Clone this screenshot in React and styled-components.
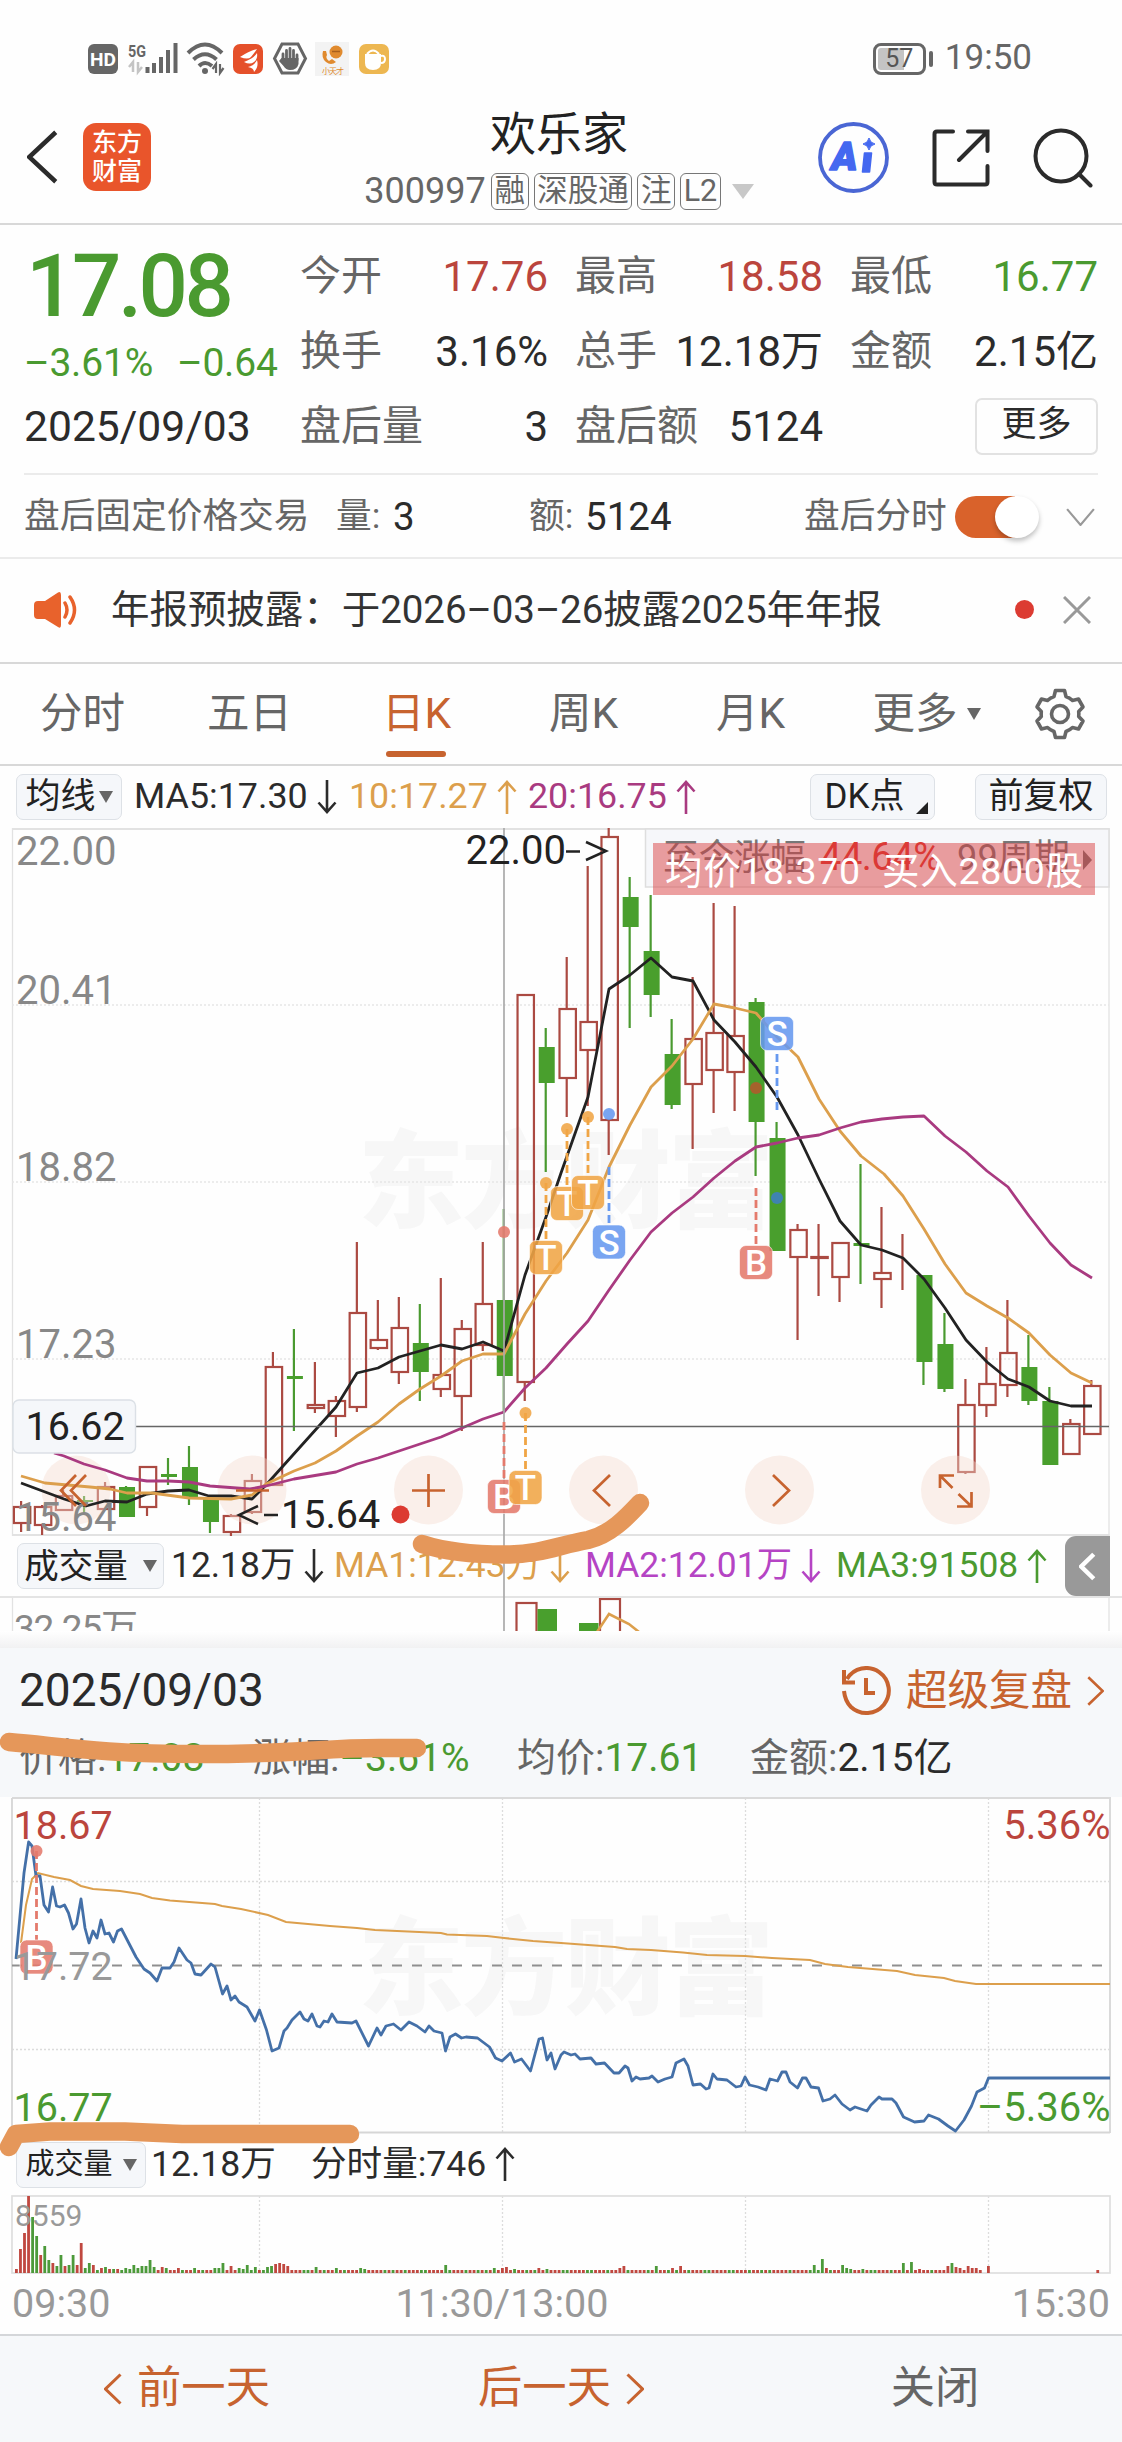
import React from "react";
import styled, { createGlobalStyle } from "styled-components";

const GREEN = "#4a9a30";
const RED = "#bb453d";
const ORANGE = "#c7632f";
const AMBER = "#dc9f4c";
const PURPLE = "#a93a80";
const INK = "#2b2b2b";
const GRAY = "#666";

const GlobalStyle = createGlobalStyle`
    * { box-sizing: border-box; }
    body {
        margin: 0;
        background: #fefefe;
        color: ${INK};
        font-family: Roboto, "Noto Sans CJK SC", sans-serif;
        line-height: 1.17;
        -webkit-font-smoothing: antialiased;
    }
    svg { display: block; flex: none; }
`;

const Page = styled.div`
    position: relative;
    width: 1122px;
    height: 2442px;
    overflow: hidden;
    white-space: nowrap;
`;

const StatusBar = styled.div`
    height: 82px;
    padding: 35px 90px 0 88px;
    display: flex;
    align-items: center;
    justify-content: space-between;
`;

const StatusGroup = styled.div`
    display: flex;
    align-items: center;
`;

const Battery = styled.div`
    width: 53px;
    height: 32px;
    border: 3px solid ${GRAY};
    border-radius: 8px;
    padding: 2px;
    position: relative;
    display: flex;
    align-items: center;
    justify-content: center;
    font-size: 25px;
    line-height: 22px;
    color: #555;
    background: linear-gradient(90deg, #c4c4c4 26px, transparent 26px) content-box;
    &::after {
        content: "";
        position: absolute;
        right: -10px;
        top: 5px;
        width: 4px;
        height: 16px;
        border-radius: 2px;
        background: ${GRAY};
    }
`;

const Clock = styled.span`
    font-size: 35px;
    color: ${GRAY};
    margin-left: 19px;
`;

const NavBar = styled.div`
    height: 143px;
    border-bottom: 2px solid #d8d8d8;
    display: grid;
    grid-template-columns: 340px 438px 1fr;
    align-items: center;
`;

const NavLeft = styled.div`
    display: flex;
    align-items: center;
    gap: 25px;
    padding: 9px 0 0 27px;
`;

const AppLogo = styled.div`
    width: 68px;
    height: 68px;
    border-radius: 13px;
    background: #e9552b;
    color: #fff;
    font-size: 25px;
    font-weight: 500;
    line-height: 29px;
    text-align: center;
    white-space: normal;
    padding: 5px 8px;
`;

const NavCenter = styled.div`
    display: flex;
    flex-direction: column;
    align-items: center;
    padding-top: 11px;
`;

const StockName = styled.div`
    font-size: 46px;
    line-height: 58px;
    color: #222;
`;

const StockMeta = styled.div`
    display: flex;
    align-items: center;
    gap: 5px;
    margin-top: 8px;
    height: 40px;
    font-size: 36px;
    color: ${GRAY};
`;

const Tag = styled.span`
    height: 37px;
    min-width: 38px;
    padding: 0 2.5px;
    border: 1.5px solid #777;
    border-radius: 6px;
    font-size: 30.5px;
    line-height: 33px;
    text-align: center;
`;

const Triangle = styled.i`
    width: 0;
    height: 0;
    border-left: ${({ $w }) => $w / 2}px solid transparent;
    border-right: ${({ $w }) => $w / 2}px solid transparent;
    border-top: ${({ $h }) => $h}px solid ${({ $color }) => $color || GRAY};
    margin-left: ${({ $ml }) => $ml || 0}px;
`;

const NavRight = styled.div`
    display: flex;
    align-items: center;
    gap: 43px;
    padding: 10px 0 0 40px;
`;

const QuotePanel = styled.div`
    display: flex;
    height: 250px;
    margin: 0 24px;
    padding-top: 14px;
    border-bottom: 2px solid #ebebeb;
`;

const PriceColumn = styled.div`
    width: 276px;
    display: flex;
    flex-direction: column;
`;

const Price = styled.div`
    height: 94px;
    line-height: 95px;
    padding-left: 2px;
    font-size: 87px;
    font-weight: 500;
    letter-spacing: -3.5px;
    color: ${GREEN};
`;

const Change = styled.div`
    height: 58px;
    line-height: 60px;
    font-size: 39px;
    letter-spacing: -0.2px;
    color: ${GREEN};
    display: flex;
    gap: 24px;
`;

const QuoteDate = styled.div`
    line-height: 70px;
    font-size: 42.6px;
`;

const QuoteGrid = styled.div`
    flex: 1;
    display: grid;
    grid-template-columns: 248px 248px 248px;
    grid-template-rows: repeat(3, 75px);
    column-gap: 27px;
`;

const QuoteCell = styled.div`
    display: flex;
    align-items: center;
    justify-content: space-between;
    font-size: 42px;
    color: ${({ $color }) => $color || INK};
`;

const QuoteLabel = styled.span`
    font-size: 41px;
    color: ${GRAY};
`;

const MoreButton = styled.div`
    justify-self: end;
    align-self: center;
    width: 123px;
    height: 57px;
    border: 2px solid #e2e2e2;
    border-radius: 7px;
    font-size: 35px;
    line-height: 50px;
    text-align: center;
`;

const AfterHours = styled.div`
    height: 84px;
    padding: 1px 24px 0 24px;
    border-bottom: 2px solid #ebebeb;
    display: grid;
    grid-template-columns: 312px 57px 136px 56px 219px 151px 111px 1fr;
    align-items: center;
    font-size: 38.5px;
`;

const SmallLabel = styled.span`
    font-size: 35.7px;
    color: ${GRAY};
`;

const Toggle = styled.div`
    width: 84px;
    height: 42px;
    border-radius: 21px;
    background: linear-gradient(90deg, #d9622b 60px, transparent 60px);
    display: flex;
    justify-content: flex-end;
    &::after {
        content: "";
        width: 44px;
        height: 42px;
        border-radius: 50%;
        background: #fff;
        box-shadow: 0 3px 5px rgba(0, 0, 0, 0.25);
    }
`;

const Notice = styled.div`
    height: 105px;
    padding: 0 31px 2px 34px;
    border-bottom: 2px solid #d8d8d8;
    display: flex;
    align-items: center;
    font-size: 38.5px;
    color: #333;
`;

const NoticeText = styled.div`
    flex: 1;
    padding-left: 32px;
    letter-spacing: -0.05px;
`;

const RedDot = styled.i`
    width: 19px;
    height: 19px;
    border-radius: 50%;
    background: #dc3b32;
    margin-right: 29px;
`;

const Tabs = styled.div`
    height: 102px;
    border-bottom: 2px solid #d8d8d8;
    display: grid;
    grid-template-columns: repeat(5, 167px) 185px 82px;
`;

const Tab = styled.div`
    position: relative;
    display: flex;
    align-items: center;
    justify-content: center;
    gap: 9px;
    padding: 0 2px 0 0;
    font-size: 42.5px;
    color: ${({ $active }) => ($active ? ORANGE : GRAY)};
    &::after {
        content: "";
        display: ${({ $active }) => ($active ? "block" : "none")};
        position: absolute;
        left: 52px;
        bottom: 7px;
        width: 60px;
        height: 6px;
        border-radius: 3px;
        background: ${ORANGE};
    }
`;

const MaRow = styled.div`
    height: 62px;
    padding-left: 16px;
    display: grid;
    grid-template-columns: 118px 215px 179px 282px 165px 132px;
    align-items: center;
    font-size: 35.8px;
`;

const Chip = styled.div`
    width: ${({ $w }) => $w}px;
    height: 46px;
    border: 1.5px solid #dde1e6;
    border-radius: 7px;
    background: #f5f7fa;
    color: #222;
    display: flex;
    align-items: center;
    justify-content: center;
    gap: ${({ $gap }) => $gap || 0}px;
    font-size: ${({ $size }) => $size || 35}px;
`;

const CornerMark = styled.i`
    align-self: flex-end;
    margin: 0 -8px 5px 12px;
    border-left: 12px solid transparent;
    border-bottom: 12px solid #222;
`;

const Reading = styled.div`
    display: flex;
    align-items: center;
    gap: ${({ $gap }) => $gap || 9}px;
    color: ${({ $color }) => $color || INK};
`;

const VolumeRow = styled.div`
    height: 62px;
    border-bottom: 2px solid #e4e4e4;
    padding-left: 17px;
    display: grid;
    grid-template-columns: 154px 163px 251px 251px 229px 45px;
    align-items: center;
    font-size: 35.4px;
`;

const Drawer = styled.div`
    height: 60px;
    border-radius: 11px 0 0 11px;
    background: #999;
    display: flex;
    align-items: center;
    justify-content: center;
`;

const SheetShadow = styled.div`
    height: 17px;
    background: linear-gradient(#fff, #f1f1f2);
`;

const SheetHead = styled.div`
    height: 149px;
    padding: 13px 18px 0 19px;
    background: #f6f8fa;
`;

const SheetTitle = styled.div`
    height: 60px;
    display: flex;
    align-items: center;
    font-size: 46px;
`;

const Replay = styled.div`
    margin-left: auto;
    display: flex;
    align-items: center;
    font-size: 41.5px;
    color: ${ORANGE};
    gap: 15px;
`;

const SheetStats = styled.div`
    height: 76px;
    display: grid;
    grid-template-columns: 233px 265px 233px 1fr;
    align-items: center;
    font-size: 39px;
    color: ${GRAY};
    b {
        font-weight: 400;
        color: ${GREEN};
    }
    em {
        font-style: normal;
        color: ${INK};
    }
`;

const MinuteVolumeRow = styled.div`
    height: 61px;
    padding-left: 16px;
    display: grid;
    grid-template-columns: 135px 160px 1fr;
    align-items: center;
    font-size: 35.6px;
`;

const TimeAxis = styled.div`
    height: 60px;
    padding: 0 12px 0 12px;
    display: grid;
    grid-template-columns: 200px 1fr 200px;
    align-items: center;
    font-size: 39.5px;
    color: #999;
    span:nth-child(2) { text-align: center; padding-right: 118px; margin-right: 0; }
    span:nth-child(3) { text-align: right; }
`;

const Footer = styled.div`
    height: 108px;
    border-top: 2px solid #d4d6d9;
    background: #f6f8fa;
    display: grid;
    grid-template-columns: repeat(3, 374px);
`;

const FooterItem = styled.div`
    display: flex;
    align-items: center;
    justify-content: center;
    gap: 15px;
    font-size: 44.3px;
    color: ${({ $color }) => $color};
`;

// hand-drawn highlighter, floats above the whole page
const MarkerLayer = styled.svg`
    position: absolute;
    left: 0;
    top: 0;
    pointer-events: none;
`;

/* ---------- icons ---------- */

const Chevron = ({ w, h, dir, stroke = 3, color = ORANGE }) => {
    const p = stroke / 2;
    const paths = {
        left: `M${w - p} ${p}L${p} ${h / 2}L${w - p} ${h - p}`,
        right: `M${p} ${p}L${w - p} ${h / 2}L${p} ${h - p}`,
        down: `M${p} ${p}L${w / 2} ${h - p}L${w - p} ${p}`,
    };
    return (
        <svg width={w} height={h} fill="none" stroke={color} strokeWidth={stroke}>
            <path d={paths[dir]} />
        </svg>
    );
};

const Arrow = ({ up }) => (
    <svg width="20" height="36" fill="none" stroke="currentColor" strokeWidth="2.6">
        <path d={up ? "M10 35V3M1.5 12.5L10 3L18.5 12.5" : "M10 1V33M1.5 23.5L10 33L18.5 23.5"} />
    </svg>
);

const StatusIcons = () => (
    <svg width="302" height="34" viewBox="88 42 302 34">
        <rect x="88" y="44" width="30" height="30" rx="6" fill={GRAY} />
        <text x="90" y="66" fontSize="19" fontWeight="700" fill="#fff" textLength="26" lengthAdjust="spacingAndGlyphs">HD</text>
        <text x="128" y="56.500" fontSize="17" fontWeight="700" fill={GRAY} textLength="18" lengthAdjust="spacingAndGlyphs">5G</text>
        <path d="M133 72V62L129 67M138 62V72L142 67" fill="none" stroke="#c4c4c4" strokeWidth="2.5" />
        <path d="M147.500 73V67M154 73V63M161 73V57M168 73V50M175.500 73V43" stroke={GRAY} strokeWidth="4" />
        <g fill="none" stroke={GRAY} strokeWidth="4">
            <path d="M188 53Q205 36 222 53" />
            <path d="M193.500 59.500Q205 49 216.500 59.500" />
            <path d="M199 66Q205 60 212 66" />
        </g>
        <circle cx="205" cy="71" r="3" fill={GRAY} />
        <path d="M216 73V64L212.500 69M220 64V73L223.500 68" fill="none" stroke={GRAY} strokeWidth="2.2" />
        <rect x="233" y="44" width="30" height="30" rx="7" fill="#e5502a" />
        <path d="M240 57Q249 51 257 49Q255 52 251 57Q248 60 240 57ZM244 62Q254 58 257 53Q258 59 254 62Q250 65 244 62ZM248 67Q254 66 257 60Q259 67 254 72Q254 68 248 67Z" fill="#fff" />
        <path d="M282 44H298L305.500 58.500L298 73H282L274.500 58.500Z" fill="none" stroke={GRAY} strokeWidth="3" />
        <path d="M283 61V54M286.500 60V50.500M290 60V48.500M293.500 60V50.500M297 60V55" stroke={GRAY} strokeWidth="2.8" strokeLinecap="round" />
        <path d="M281.500 58H298.500V64Q297 70 290 70Q286 70 283.500 66L279 61Z" fill={GRAY} />
        <rect x="315" y="42" width="34" height="34" fill="#f3f3f3" />
        <path d="M323 51Q321 58 326 62Q331 66 336 62L332 59L329 61Q325 58 327 55L326 51Z" fill="#e08a2e" />
        <circle cx="336" cy="52" r="6.500" fill="#e08a2e" />
        <path d="M332 51.500H340" stroke="#a9601c" strokeWidth="1.500" />
        <text x="322" y="73.500" fontSize="8" fill="#e08a2e" textLength="22">小天才</text>
        <rect x="359" y="44" width="30" height="30" rx="7" fill="#edb751" />
        <path d="M365 54H381V63Q381 70 373 70Q365 70 365 63Z" fill="#fff" />
        <path d="M381 56Q385 55 385 59Q385 63 381 63M367 54Q373 47 379 54" fill="none" stroke="#fff" strokeWidth="2" />
    </svg>
);

const AiIcon = () => (
    <svg width="71" height="71" viewBox="0 0 71 71">
        <circle cx="35.500" cy="35.500" r="33.500" fill="none" stroke="#4a66d4" strokeWidth="3.800" />
        <text x="13.500" y="48" fontSize="39" fontWeight="900" fontStyle="italic" fill="#4468f0" stroke="#4468f0" strokeWidth="1.600" strokeLinejoin="round" textLength="26" lengthAdjust="spacingAndGlyphs">A</text>
        <path d="M46.500 31H53.500L51.500 50H44.500Z" fill="#4468f0" stroke="#4468f0" strokeWidth="1.600" strokeLinejoin="round" />
        <path d="M51 16Q52 21 57 22Q52 23 51 28Q50 23 45 22Q50 21 51 16Z" fill="#4468f0" stroke="#4468f0" strokeWidth="1" />
    </svg>
);

const ShareIcon = () => (
    <svg width="58" height="58" viewBox="0 0 58 58" fill="none" stroke="#2b2b2b" strokeWidth="4" strokeLinecap="round">
        <path d="M21 2.500H5Q2.500 2.500 2.500 5V53Q2.500 55.500 5 55.500H53Q55.500 55.500 55.500 53V37" />
        <path d="M36 2.500H55.500V22M55.500 2.500L27 31" />
    </svg>
);

const SearchIcon = () => (
    <svg width="60" height="60" viewBox="0 0 60 60" fill="none" stroke="#2b2b2b" strokeWidth="4" strokeLinecap="round">
        <circle cx="28" cy="28" r="25.500" />
        <path d="M46 46L57.500 57.500" />
    </svg>
);

const SpeakerIcon = () => (
    <svg width="45" height="38" viewBox="0 0 45 38">
        <path d="M4 10H11L24 1.500Q27 0 27 4V34Q27 38 24 36L11 28H4Q0 28 0 24V14Q0 10 4 10Z" fill="#e8622c" />
        <path d="M31 12Q35 19 31 26M36 6Q45 19 36 32" fill="none" stroke="#e8622c" strokeWidth="3.500" strokeLinecap="round" />
    </svg>
);

const GearIcon = () => (
    <svg width="52" height="52" viewBox="0 0 52 52" fill="none" stroke={GRAY} strokeWidth="3.600" strokeLinejoin="round">
        <path d="M21.500 2.500H30.500L32 8.500Q36 10 38.500 12.500L44.500 11L49 19L44.700 23.500Q45 26 44.700 28.500L49 33L44.500 41L38.500 39.500Q36 42 32 43.500L30.500 49.500H21.500L20 43.500Q16 42 13.500 39.500L7.500 41L3 33L7.300 28.500Q7 26 7.300 23.500L3 19L7.500 11L13.500 12.500Q16 10 20 8.500Z" />
        <circle cx="26" cy="26" r="8.500" />
    </svg>
);

const HistoryIcon = () => (
    <svg width="50" height="50" viewBox="0 0 50 50" fill="none" stroke={ORANGE} strokeWidth="4">
        <path d="M3 25Q4 35 10 41A22.500 22.500 0 1 0 6 13" />
        <path d="M3 4V16.500H14" />
        <path d="M25 12V27H34" />
    </svg>
);

/* ---------- K line chart ---------- */

const candleX = (i) => 21.1 + 20.985 * i;

// [up, body top, body bottom, high, low] in page pixels
const candles = [
    [1, 1507, 1523, 1501, 1532], [1, 1507, 1525, 1505, 1535], [1, 1496, 1510, 1490, 1510],
    [0, 1500, 1502, 1496, 1515], [1, 1487, 1509, 1482, 1510], [0, 1487, 1517, 1486, 1517],
    [1, 1467, 1507, 1467, 1516], [0, 1474, 1477, 1458, 1485], [0, 1467, 1498, 1446, 1505],
    [0, 1498, 1522, 1498, 1533], [1, 1516, 1532, 1514, 1536], [1, 1481, 1512, 1474, 1514],
    [1, 1367, 1485, 1352, 1485], [0, 1376, 1379, 1329, 1431], [1, 1405, 1408, 1362, 1413],
    [1, 1401, 1416, 1396, 1437], [1, 1313, 1407, 1242, 1412], [1, 1340, 1348, 1300, 1350],
    [1, 1328, 1372, 1297, 1384], [0, 1343, 1372, 1304, 1401], [1, 1375, 1389, 1278, 1397],
    [1, 1329, 1396, 1320, 1431], [1, 1304, 1345, 1242, 1351], [0, 1300, 1376, 1209, 1412],
    [1, 995, 1382, 994, 1401], [0, 1047, 1083, 1028, 1172], [1, 1009, 1078, 957, 1117],
    [1, 1022, 1050, 866, 1106], [1, 837, 1120, 828, 1155], [0, 897, 927, 877, 1028],
    [0, 951, 995, 895, 1017], [0, 1054, 1105, 1019, 1109], [1, 1039, 1084, 977, 1149],
    [1, 1033, 1070, 903, 1113], [1, 1036, 1072, 906, 1111], [0, 1002, 1122, 998, 1176],
    [0, 1138, 1251, 1122, 1251], [1, 1230, 1257, 1224, 1340], [1, 1257, 1258, 1224, 1296],
    [1, 1243, 1277, 1242, 1302], [0, 1243, 1246, 1164, 1284], [1, 1273, 1279, 1207, 1308],
    [1, 1271, 1271, 1234, 1290], [0, 1275, 1362, 1275, 1385], [0, 1344, 1389, 1313, 1392],
    [1, 1405, 1472, 1379, 1474], [1, 1384, 1405, 1347, 1417], [1, 1353, 1385, 1300, 1397],
    [0, 1367, 1401, 1335, 1405], [0, 1401, 1465, 1387, 1465], [1, 1424, 1454, 1419, 1454],
    [1, 1386, 1434, 1380, 1434],
];

const ma5 = "21,1483 64,1499 86,1506 105,1501 127,1502 147,1494 168,1491 189,1490 209,1496 231,1496 252,1499 266,1485 336,1407 357,1373 378,1368 399,1357 420,1351 441,1345 462,1349 483,1342 504,1351 525,1275 546,1217 561,1173 588,1097 609,989 630,975 651,958 672,977 693,981 714,1020 735,1042 756,1067 777,1097 798,1135 819,1179 840,1221 861,1245 882,1250 903,1258 924,1279 945,1308 966,1340 987,1362 1008,1379 1029,1387 1050,1401 1071,1406 1092,1406";
const ma10 = "21,1476 45,1483 90,1487 110,1489 127,1493 152,1493 189,1498 231,1499 252,1495 266,1484 294,1471 315,1463 336,1451 357,1436 378,1422 399,1404 420,1389 441,1376 462,1361 483,1354 504,1354 525,1314 546,1281 567,1253 588,1220 609,1167 630,1125 651,1087 672,1066 693,1039 714,1004 735,1008 756,1013 777,1037 798,1057 819,1099 840,1131 861,1156 884,1174 903,1196 924,1229 945,1264 966,1293 987,1306 1008,1318 1029,1333 1050,1355 1071,1373 1092,1383";
const ma20 = "54,1453 64,1456 84,1464 105,1470 127,1478 147,1481 168,1481 189,1482 210,1486 250,1489 266,1486 294,1479 336,1472 357,1464 378,1458 399,1451 420,1444 441,1437 462,1428 483,1419 504,1412 525,1388 546,1368 567,1344 588,1321 609,1290 630,1260 651,1232 672,1213 693,1197 714,1178 735,1161 756,1147 777,1143 798,1138 819,1135 840,1128 861,1122 882,1119 903,1117 924,1116 945,1136 966,1152 987,1171 1008,1187 1029,1216 1050,1243 1071,1265 1092,1278";

const Candle = ({ i, data }) => {
    const [up, top, bottom, high, low] = data;
    const x = candleX(i);
    if (up) {
        return (
            <g stroke="#ab4a42" strokeWidth="2.2" fill="none">
                <path d={`M${x} ${high}V${top}M${x} ${bottom}V${low}`} />
                <rect x={x - 7.2} y={top} width="16.4" height={bottom - top} />
            </g>
        );
    }
    return (
        <g>
            <path d={`M${x} ${high}V${low}`} stroke={GREEN} strokeWidth="2.2" />
            <rect x={x - 7} y={top} width="16" height={bottom - top} fill="#499f2d" />
        </g>
    );
};

const badgeColors = { T: "#f0a545", S: "#6799ef", B: "#e47a6c" };

const Badge = ({ type, x, y, dot, line }) => {
    const color = badgeColors[type];
    return (
        <g>
            {line && <path d={`M${x} ${line[0]}V${line[1]}`} stroke={color} strokeWidth="2.8" strokeDasharray="8 4" />}
            {dot && <circle cx={x} cy={dot} r="6" fill={color} fillOpacity=".88" />}
            <rect x={x - 16.5} y={y - 17} width="33" height="34" rx="6.500" fill={color} fillOpacity=".88" stroke="#fff" strokeOpacity=".6" strokeWidth="1" />
            <text x={x} y={y + 12.5} fontSize="35" fontWeight="500" fill="#fff" textAnchor="middle">{type}</text>
        </g>
    );
};

const Watermark = ({ y }) => (
    <text x="358" y={y} fontSize="106" fontWeight="900" fill="#f7f7f7" textLength="416">东方财富</text>
);

const controlXs = [76, 252, 428.5, 603.5, 779.5, 955.5];

const KLineChart = () => (
    <svg width="1122" height="708" viewBox="0 828 1122 708">
        <Watermark y={1219} />
        <path d="M12.500 829H1109.500M12.500 1535H1109.500" stroke="#e2e2e2" strokeWidth="2" />
        <path d="M12.500 828V1536M1109 828V1536" stroke="#e2e2e2" strokeWidth="1.300" />
        <path d="M12 1005H1109M12 1182H1109M12 1359H1109" stroke="#e6e6e6" strokeWidth="1.500" strokeDasharray="2 2" />
        {candles.map((c, i) => <Candle key={i} i={i} data={c} />)}

        {controlXs.map((x) => <circle key={x} cx={x} cy="1490" r="34.500" fill="#f6dccf" fillOpacity=".42" />)}

        <g fill="none" strokeWidth="2.800" strokeLinejoin="round">
            <polyline points={ma5} stroke="#222" />
            <polyline points={ma10} stroke={AMBER} />
            <polyline points={ma20} stroke={PURPLE} />
        </g>
        <circle cx="756" cy="1088" r="6" fill="#a5622c" />
        <circle cx="777" cy="1198" r="6" fill="#3f83b0" />

        <g fontSize="40" fill="#888">
            <text x="16" y="865">22.00</text>
            <text x="16" y="1004">20.41</text>
            <text x="16" y="1181">18.82</text>
            <text x="16" y="1358">17.23</text>
            <text x="16" y="1531">15.64</text>
        </g>

        <path d="M504 828V1536" stroke="#aaa" strokeWidth="1.700" />
        <path d="M135 1426.500H1109" stroke="#666" strokeWidth="1.300" />
        <rect x="13" y="1400" width="122.500" height="53" rx="6" fill="#f5f7fa" stroke="#dbe0e6" strokeWidth="1.400" />
        <text x="25.500" y="1439.500" fontSize="39.500" fill="#222">16.62</text>

        <text x="465.500" y="863.500" fontSize="40" fill="#222">22.00</text>
        <path d="M566 851.500H580M586 842L606 851L586 860" fill="none" stroke="#222" strokeWidth="2.500" />
        <path d="M258 1506L239 1515L258 1524M264 1515H278" fill="none" stroke="#222" strokeWidth="2.500" />
        <text x="281" y="1527.500" fontSize="39.500" fill="#222">15.64</text>
        <circle cx="400.500" cy="1514.500" r="9" fill="#dc3b32" />

        <Badge type="T" x={546} y={1257.5} dot={1183} line={[1183, 1240]} />
        <Badge type="T" x={567} y={1203.5} dot={1129} line={[1129, 1187]} />
        <Badge type="T" x={588} y={1192.5} dot={1117} line={[1117, 1176]} />
        <Badge type="S" x={609} y={1242} dot={1114} line={[1167, 1225]} />
        <Badge type="S" x={777} y={1033.5} line={[1054, 1110]} />
        <Badge type="B" x={756} y={1262.5} line={[1188, 1245]} />
        <Badge type="B" x={504} y={1496.5} dot={1232} line={[1422, 1480]} />
        <Badge type="T" x={525.5} y={1487.5} dot={1413} line={[1413, 1470]} />

        <g fill="none" stroke={ORANGE} strokeWidth="2.700">
            <path d="M76 1475L61 1490.500L76 1506M86 1475L71 1490.500L86 1506" />
            <path d="M236 1490.500H269" />
            <path d="M412 1490.500H445M428.500 1474V1507" />
            <path d="M610 1475L594 1490.500L610 1506" />
            <path d="M773 1475L789 1490.500L773 1506" />
            <path d="M940 1488V1475.500H954M940.500 1476L952.500 1488M958.500 1494L971 1506M971.500 1492V1506.500H957" />
        </g>

        <rect x="645.500" y="829" width="463.500" height="58" fill="#f6f7fa" stroke="#dedede" strokeWidth="1.500" />
        <g fontSize="36" fill="#777">
            <text x="663" y="870" textLength="143">至今涨幅</text>
            <text x="820" y="870" fontSize="38" fill="#dc3b32" textLength="121">44.64%</text>
            <text x="957" y="870" textLength="113">99周期</text>
        </g>
        <path d="M1083 850L1092 860L1083 870Z" fill="#777" />
        <rect x="653" y="843" width="442" height="52" fill="#d9393a" fillOpacity=".48" />
        <text x="665" y="883.500" fontSize="37.500" fill="#fff" textLength="195">均价18.370</text>
        <text x="882" y="883.500" fontSize="37.500" fill="#fff" textLength="201">买入2800股</text>
    </svg>
);

const KVolumeChart = () => (
    <svg width="1122" height="33" viewBox="0 1598 1122 33">
        <path d="M12.500 1598V1631M1109 1598V1631" stroke="#e2e2e2" strokeWidth="1.300" />
        <text x="14" y="1641" fontSize="37" fill="#888" textLength="124">32.25万</text>
        <path d="M504 1598V1631" stroke="#aaa" strokeWidth="1.700" />
        <g fill="none" stroke="#ab4a42" strokeWidth="2.200">
            <rect x="516.500" y="1603" width="20" height="60" />
            <rect x="600" y="1599" width="20" height="60" />
        </g>
        <rect x="537.500" y="1609" width="19.500" height="40" fill="#499f2d" />
        <rect x="579" y="1623" width="19.500" height="40" fill="#499f2d" />
        <polyline points="597,1632 609,1614 629,1624 639,1632" fill="none" stroke={AMBER} strokeWidth="2.600" />
    </svg>
);

/* ---------- intraday chart ---------- */

const averageLine = "21,1943 26,1905 32,1879 38,1873 54,1877 70,1880 81,1886 93,1889 120,1891 140,1894 152,1898 170,1900.5 215,1904 222,1906 241,1909 268,1915 286,1922 330,1926 357,1928 375,1930 441,1933 447,1934.5 487,1936 504,1938 533,1941 561,1943 615,1947 627,1949 651,1950 683,1952.5 707,1955 745,1956 772,1958 810,1960 825,1964 848,1967 897,1971 915,1975 944,1978 955,1981 976,1984 1110,1984";
const priceLine = "16,1959 24,1873 28.6,1842 32,1846 36,1876 40,1876 44,1905 48.5,1912 52.6,1887 56.5,1906 60,1907 64.5,1905 68.5,1913 73,1929 76.5,1924 81,1899 85,1928 89,1943 93,1931 97,1938 101,1920 105,1934 109,1933 113.5,1942 117.5,1931 121.5,1929 136,1957 144,1969 150,1973 157,1981 162,1968 170,1968 174,1962 179,1948 187,1960 191,1963 195,1974 201,1975 211,1964 215,1967 222.5,1994 227,1986 231,2000 235,1996 239,2002 247,2007 255,2021 259.5,2010 266.5,2030 272,2051 279,2048 284,2031 287,2028 292,2020 300,2012 304,2019 308,2021 312,2014 317,2026 320,2027 324,2021 328,2022 332,2014 337,2022 352,2023 356,2021 368.5,2046 377,2028 381,2035 386,2026 393.5,2024 401,2030 409,2022 417,2026 425,2032 429,2026 434,2031 442,2033 445.5,2051 450,2037 455.5,2034 461.5,2038 466,2037 477.5,2038 489.5,2047 495.5,2058 502,2061 510.5,2053 514.5,2062 521.5,2059 530.5,2071 539,2039 542.5,2038 547,2060 551,2053 555,2069 561,2055 564,2052 571,2055 575,2054 580,2059 591,2058 596,2064 604.5,2063 614,2073 619,2073 625,2066 628,2068 632,2081 636,2077 640,2079 649,2078 652,2076 658,2082 665,2079 672,2077 676,2063 684,2059 688,2066 693,2085 700.5,2084 706,2089 709,2088 713,2074 717,2079 727,2080 736,2087 741,2086 745,2077 749.5,2085 758,2087 766,2090 770,2079 777.5,2081 782,2072 786,2072 790,2082 797.5,2088 802.5,2078 806,2078 811,2087 818.5,2088 823,2101 830,2099 835,2095 842,2104 850,2110 855,2107 867,2111 871,2105 879,2097 882,2099 892,2099 896,2103 903.5,2117 914.5,2122 924,2121 928.5,2115 938.5,2119 948,2126 955.5,2131 964,2120 971.5,2106 977,2092 984.5,2088 988.5,2078 1110,2078";

const MinuteChart = () => (
    <svg width="1122" height="337" viewBox="0 1797 1122 337">
        <Watermark y={2006} />
        <path d="M259.500 1798V2133M502.500 1798V2133M745.500 1798V2133M988.500 1798V2133M12 1881.500H1110M12 2049.500H1110" stroke="#dcdcdc" strokeWidth="1.300" strokeDasharray="2 2" />
        <path d="M12 1798H1110V2133" fill="none" stroke="#dadada" strokeWidth="2" />
        <path d="M12 1798V2132.500H1110" fill="none" stroke="#d6d6d6" strokeWidth="1.800" />
        <path d="M12 1965.500H1110" stroke="#8f8f8f" strokeWidth="2" strokeDasharray="10 10" />
        <polyline points={averageLine} fill="none" stroke={AMBER} strokeWidth="2" />
        <polyline points={priceLine} fill="none" stroke="#4470a8" strokeWidth="2.800" strokeLinejoin="round" />
        <Badge type="B" x={36.500} y={1957} dot={1851} line={[1851, 1940]} />
        <g fontSize="39.500">
            <text x="13.500" y="1839" fill={RED}>18.67</text>
            <text x="13.500" y="1980" fill="#999">17.72</text>
            <text x="13.500" y="2121" fill={GREEN}>16.77</text>
            <text x="1110.500" y="1839" fontSize="40" fill={RED} textAnchor="end">5.36%</text>
            <text x="1110.500" y="2121" fontSize="40" fill={GREEN} textAnchor="end">–5.36%</text>
        </g>
    </svg>
);

// minute -> [height, up]; quiet minutes are filled in below
const spikes = {
    0: [4, 1], 1: [24, 1], 2: [40, 1], 3: [77, 1], 4: [56, 0], 5: [37, 0], 6: [18, 1], 7: [27, 0], 8: [13, 0], 9: [10, 1],
    10: [7, 0], 11: [18, 0], 12: [7, 1], 13: [8, 0], 14: [18, 0], 15: [8, 1], 16: [30, 1], 17: [5, 0], 18: [10, 0], 19: [8, 1],
    20: [3, 0], 21: [5, 1], 22: [6, 0], 23: [4, 1], 24: [4, 0], 25: [4, 1], 27: [5, 0], 28: [4, 0], 29: [8, 0], 30: [5, 0],
    31: [7, 0], 32: [7, 0], 33: [13, 0], 34: [6, 0], 36: [6, 1], 37: [5, 0], 40: [5, 1], 44: [5, 0], 49: [5, 0], 50: [5, 0],
    51: [10, 0], 53: [7, 1], 55: [5, 0], 56: [4, 0], 57: [8, 0], 59: [6, 0], 62: [6, 0], 63: [7, 0], 64: [9, 1], 65: [10, 1],
    66: [9, 1], 67: [7, 1], 74: [6, 0], 79: [5, 0], 85: [5, 0], 86: [4, 0], 106: [8, 0], 118: [5, 0], 120: [5, 1], 121: [6, 1],
    123: [4, 0], 129: [5, 1], 131: [4, 0], 149: [5, 1], 150: [7, 1], 158: [7, 0], 162: [5, 1], 164: [7, 1], 197: [8, 0],
    199: [14, 0], 200: [5, 1], 204: [8, 0], 205: [5, 0], 206: [4, 0], 209: [4, 0], 219: [10, 0], 221: [11, 0], 223: [4, 1],
    230: [7, 1], 231: [10, 0], 232: [6, 1], 233: [5, 1], 235: [7, 1], 236: [5, 1], 237: [5, 1], 240: [7, 1], 267: [3, 1],
};

const minuteBars = Array.from({ length: 268 }, (_, k) => {
    if (spikes[k]) return spikes[k];
    if (k > 238) return null;
    return [3, k % 7 === 2 || k % 5 === 1 ? 0 : 1];
});

const MinuteVolumeChart = () => (
    <svg width="1122" height="79" viewBox="0 2195 1122 79">
        <path d="M259.500 2196V2273M502.500 2196V2273M745.500 2196V2273M988.500 2196V2273" stroke="#dcdcdc" strokeWidth="1.300" strokeDasharray="2 2" />
        <rect x="12" y="2196" width="1098" height="77" fill="none" stroke="#dedede" strokeWidth="1.700" />
        {minuteBars.map((bar, k) => bar && (
            <rect key={k} x={15 + 4.05 * k} y={2273 - bar[0]} width="2.800" height={bar[0]} fill={bar[1] ? "#c04840" : "#4c9a3a"} />
        ))}
        <text x="15" y="2226" fontSize="30" fill="#999">8559</text>
    </svg>
);

/* ---------- page ---------- */

const quoteCells = [
    ["今开", "17.76", RED],
    ["最高", "18.58", RED],
    ["最低", "16.77", GREEN],
    ["换手", "3.16%"],
    ["总手", "12.18万"],
    ["金额", "2.15亿"],
    ["盘后量", "3"],
    ["盘后额", "5124"],
];

const tabNames = ["分时", "五日", "日K", "周K", "月K"];

const App = () => {
    const activeTab = 2;

    return (
        <Page>
            <GlobalStyle />
            <StatusBar>
                <StatusIcons />
                <StatusGroup>
                    <Battery>57</Battery>
                    <Clock>19:50</Clock>
                </StatusGroup>
            </StatusBar>

            <NavBar>
                <NavLeft>
                    <Chevron w={31} h={54} dir="left" stroke={4.5} color="#2b2b2b" />
                    <AppLogo>东方财富</AppLogo>
                </NavLeft>
                <NavCenter>
                    <StockName>欢乐家</StockName>
                    <StockMeta>
                        300997
                        <Tag>融</Tag>
                        <Tag>深股通</Tag>
                        <Tag>注</Tag>
                        <Tag>L2</Tag>
                        <Triangle $w={22} $h={15} $ml={6} $color="#c8c8c8" />
                    </StockMeta>
                </NavCenter>
                <NavRight>
                    <AiIcon />
                    <ShareIcon />
                    <SearchIcon />
                </NavRight>
            </NavBar>

            <QuotePanel>
                <PriceColumn>
                    <Price>17.08</Price>
                    <Change>
                        <span>–3.61%</span>
                        <span>–0.64</span>
                    </Change>
                    <QuoteDate>2025/09/03</QuoteDate>
                </PriceColumn>
                <QuoteGrid>
                    {quoteCells.map(([label, value, color]) => (
                        <QuoteCell key={label} $color={color}>
                            <QuoteLabel>{label}</QuoteLabel>
                            {value}
                        </QuoteCell>
                    ))}
                    <MoreButton>更多</MoreButton>
                </QuoteGrid>
            </QuotePanel>

            <AfterHours>
                <SmallLabel>盘后固定价格交易</SmallLabel>
                <SmallLabel>量:</SmallLabel>
                <span>3</span>
                <SmallLabel>额:</SmallLabel>
                <span>5124</span>
                <SmallLabel>盘后分时</SmallLabel>
                <Toggle />
                <Chevron w={29} h={18} dir="down" stroke={2.2} color="#999" />
            </AfterHours>

            <Notice>
                <SpeakerIcon />
                <NoticeText>年报预披露：于2026–03–26披露2025年年报</NoticeText>
                <RedDot />
                <svg width="28" height="28" stroke="#999" strokeWidth="3">
                    <path d="M1 1L27 27M27 1L1 27" />
                </svg>
            </Notice>

            <Tabs>
                {tabNames.map((name, index) => (
                    <Tab key={name} $active={index === activeTab}>{name}</Tab>
                ))}
                <Tab>更多<Triangle $w={15} $h={12} /></Tab>
                <Tab><GearIcon /></Tab>
            </Tabs>

            <MaRow>
                <Chip $w={106} $gap={3}>均线<Triangle $w={15} $h={12} /></Chip>
                <Reading>MA5:17.30<Arrow /></Reading>
                <Reading $color={AMBER}>10:17.27<Arrow up /></Reading>
                <Reading $color={PURPLE}>20:16.75<Arrow up /></Reading>
                <Chip $w={125}>DK点<CornerMark /></Chip>
                <Chip $w={132}>前复权</Chip>
            </MaRow>

            <KLineChart />

            <VolumeRow>
                <Chip $w={147} $gap={15} $size={34.5}>成交量<Triangle $w={15} $h={12} /></Chip>
                <Reading>12.18万<Arrow /></Reading>
                <Reading $color={AMBER}>MA1:12.43万<Arrow /></Reading>
                <Reading $color="#b544c4">MA2:12.01万<Arrow /></Reading>
                <Reading $color={GREEN}>MA3:91508<Arrow up /></Reading>
                <Drawer><Chevron w={17} h={29} dir="left" stroke={4.5} color="#fff" /></Drawer>
            </VolumeRow>
            <KVolumeChart />

            <SheetShadow />
            <SheetHead>
                <SheetTitle>
                    2025/09/03
                    <Replay>
                        <HistoryIcon />
                        超级复盘
                        <Chevron w={17} h={30} dir="right" stroke={2.6} />
                    </Replay>
                </SheetTitle>
                <SheetStats>
                    <span>价格:<b>17.08</b></span>
                    <span>涨幅:<b>–3.61%</b></span>
                    <span>均价:<b>17.61</b></span>
                    <span>金额:<em>2.15亿</em></span>
                </SheetStats>
            </SheetHead>

            <MinuteChart />
            <MinuteVolumeRow>
                <Chip $w={130} $gap={10} $size={29}>成交量<Triangle $w={15} $h={12} /></Chip>
                <span>12.18万</span>
                <Reading>分时量:746<Arrow up /></Reading>
            </MinuteVolumeRow>
            <MinuteVolumeChart />
            <TimeAxis>
                <span>09:30</span>
                <span>11:30/13:00</span>
                <span>15:30</span>
            </TimeAxis>

            <Footer>
                <FooterItem $color={ORANGE}>
                    <Chevron w={18} h={32} dir="left" />
                    前一天
                </FooterItem>
                <FooterItem $color={ORANGE}>
                    后一天
                    <Chevron w={18} h={32} dir="right" />
                </FooterItem>
                <FooterItem $color={GRAY}>关闭</FooterItem>
            </Footer>

            <MarkerLayer width="1122" height="2442" viewBox="0 0 1122 2442" fill="none">
                <path d="M504 1536V1598" stroke="#aaa" strokeWidth="1.700" />
                <g stroke="#e5975a" strokeWidth="18.500" strokeLinecap="round" strokeLinejoin="round">
                    <path d="M422 1544Q455 1555 510 1554.500C540 1554 560 1545 588 1540C610 1535 627 1517 640 1503" />
                    <path d="M9 1742C60 1746 95 1754 200 1754C300 1754 320 1748 380 1748H417" />
                    <path d="M9 2147L16 2134L50 2131.500H125L182 2134H350" />
                </g>
            </MarkerLayer>
        </Page>
    );
};

export default App;
